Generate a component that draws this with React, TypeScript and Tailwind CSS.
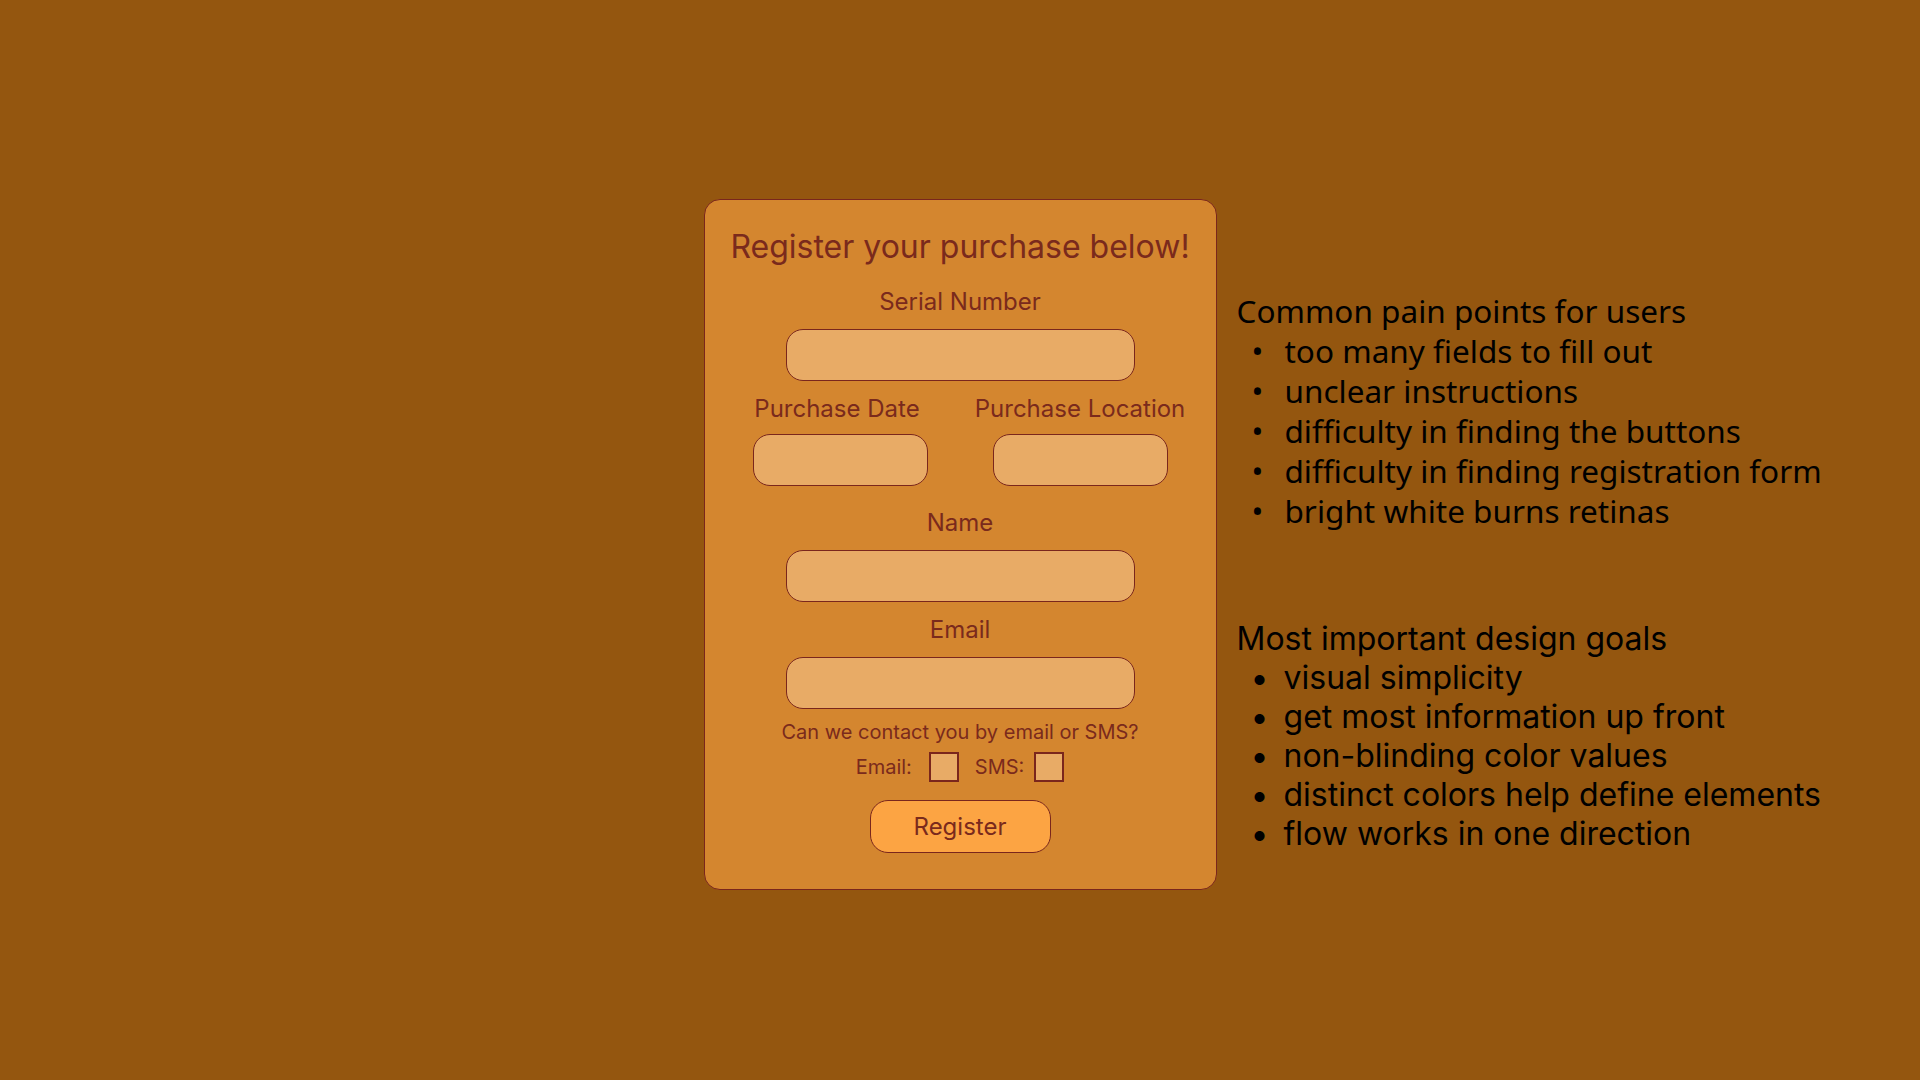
import React from 'react'

const painPoints = [
  'too many fields to fill out',
  'unclear instructions',
  'difficulty in finding the buttons',
  'difficulty in finding registration form',
  'bright white burns retinas',
]

const designGoals = [
  'visual simplicity',
  'get most information up front',
  'non-blinding color values',
  'distinct colors help define elements',
  'flow works in one direction',
]

function Field({ label }: { label: string }) {
  return (
    <div className="flex flex-col items-center">
      <label className="whitespace-nowrap text-[24px] leading-[30px] text-[#7a2a1c]">{label}</label>
      <input
        type="text"
        className="mt-3 h-[52px] w-[349px] rounded-[17px] border border-[#7a261c] bg-[#e8ab66] outline-none"
      />
    </div>
  )
}

export default function App() {
  return (
    <div className="grid min-h-[1080px] w-full grid-cols-[1fr_auto_1fr] bg-[#94560f] pt-[199px] font-['Inter',sans-serif]">
      <div />

      {/* Registration card */}
      <div className="flex h-[691px] w-[513px] flex-col items-center rounded-[16px] border border-[#7a261c] bg-[#d4862f] pt-[27px] text-[#7a2a1c]">
        <h1 className="text-[32px] leading-[40px]">Register your purchase below!</h1>

        <div className="mt-5">
          <Field label="Serial Number" />
        </div>

        <div className="mt-[13px] flex gap-[65px]">
          <div className="flex w-[175px] flex-col items-center">
            <label className="whitespace-nowrap pr-[6px] text-[24px] leading-[30px]">Purchase Date</label>
            <input
              type="text"
              className="mt-[10px] h-[52px] w-[175px] rounded-[17px] border border-[#7a261c] bg-[#e8ab66] outline-none"
            />
          </div>
          <div className="flex w-[175px] flex-col items-center">
            <label className="whitespace-nowrap text-[24px] leading-[30px]">Purchase Location</label>
            <input
              type="text"
              className="mt-[10px] h-[52px] w-[175px] rounded-[17px] border border-[#7a261c] bg-[#e8ab66] outline-none"
            />
          </div>
        </div>

        <div className="mt-[22px]">
          <Field label="Name" />
        </div>

        <div className="mt-[13px]">
          <Field label="Email" />
        </div>

        <p className="mt-[11px] text-[20px] leading-[24px]">Can we contact you by email or SMS?</p>

        <div className="mt-2 flex items-center text-[20px] leading-[24px]">
          <span>Email:</span>
          <span className="ml-[17px] h-[30px] w-[30px] border-2 border-[#7a261c] bg-[#e8ab66]" />
          <span className="ml-4">SMS:</span>
          <span className="ml-[10px] h-[30px] w-[30px] border-2 border-[#7a261c] bg-[#e8ab66]" />
        </div>

        <button className="mt-[18px] h-[53px] w-[181px] rounded-[18px] border border-[#7a261c] bg-[#fca443] text-[24px] text-[#7a2a1c]">
          Register
        </button>
      </div>

      {/* Notes */}
      <div className="pl-[20px] pt-[92px] text-black">
        <div className="font-['Noto_Sans',sans-serif] text-[31.5px] leading-[40px]">
          <div>Common pain points for users</div>
          <ul>
            {painPoints.map((item) => (
              <li key={item} className="flex whitespace-nowrap">
                <span className="w-[48px] pl-[15px]">•</span>
                <span>{item}</span>
              </li>
            ))}
          </ul>
        </div>

        <div className="mt-[88px] text-[32px] leading-[39px]">
          <div>Most important design goals</div>
          <ul>
            {designGoals.map((item) => (
              <li key={item} className="flex whitespace-nowrap">
                <span className="w-[47px] pl-[14px]">•</span>
                <span>{item}</span>
              </li>
            ))}
          </ul>
        </div>
      </div>
    </div>
  )
}
